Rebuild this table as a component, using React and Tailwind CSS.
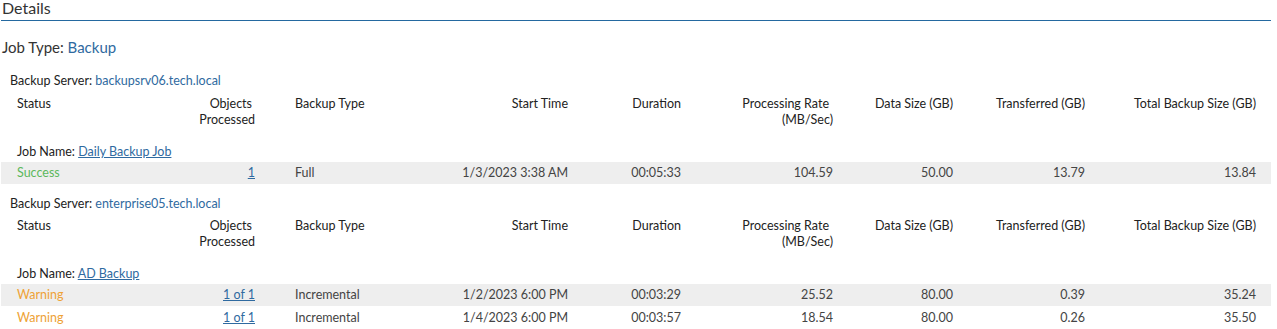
import React from 'react';

const cols = 'grid grid-cols-[118px_120px_195px_118px_113px_152px_120px_132px_171px]';

const servers = [
  {
    name: 'backupsrv06.tech.local',
    job: 'Daily Backup Job',
    rows: [
      { status: 'Success', objects: '1', type: 'Full', start: '1/3/2023 3:38 AM', duration: '00:05:33', rate: '104.59', data: '50.00', transferred: '13.79', total: '13.84' },
    ],
  },
  {
    name: 'enterprise05.tech.local',
    job: 'AD Backup',
    rows: [
      { status: 'Warning', objects: '1 of 1', type: 'Incremental', start: '1/2/2023 6:00 PM', duration: '00:03:29', rate: '25.52', data: '80.00', transferred: '0.39', total: '35.24' },
      { status: 'Warning', objects: '1 of 1', type: 'Incremental', start: '1/4/2023 6:00 PM', duration: '00:03:57', rate: '18.54', data: '80.00', transferred: '0.26', total: '35.50' },
    ],
  },
];

const statusColor = (s) => (s === 'Success' ? 'text-[#5cb85c]' : 'text-[#eea236]');

const HeaderRow = () => (
  <div className={`${cols} pl-4 text-[#222] leading-4`}>
    <div>Status</div>
    <div className="text-right">
      <div className="pr-[3px]">Objects</div>
      <div>Processed</div>
    </div>
    <div className="pl-10">Backup Type</div>
    <div className="text-right">Start Time</div>
    <div className="text-right">Duration</div>
    <div className="text-right">
      <div className="pr-1">Processing Rate</div>
      <div>(MB/Sec)</div>
    </div>
    <div className="text-right">Data Size (GB)</div>
    <div className="text-right">Transferred (GB)</div>
    <div className="text-right">Total Backup Size (GB)</div>
  </div>
);

const DataRow = ({ row, shaded }) => (
  <div className={`${cols} pl-4 h-[22px] items-center text-[#444] ${shaded ? 'bg-[#eeeeee]' : ''}`}>
    <div className={statusColor(row.status)}>{row.status}</div>
    <div className="text-right">
      <span className="text-[#2f6aa0] underline">{row.objects}</span>
    </div>
    <div className="pl-10">{row.type}</div>
    <div className="text-right">{row.start}</div>
    <div className="text-right">{row.duration}</div>
    <div className="text-right">{row.rate}</div>
    <div className="text-right">{row.data}</div>
    <div className="text-right">{row.transferred}</div>
    <div className="text-right">{row.total}</div>
  </div>
);

export default function App() {
  return (
    <div className="w-[1277px] h-[329px] overflow-hidden bg-white font-['Lato',sans-serif] text-[12.5px] text-[#333]">
      <div className="ml-px w-[1270px]">
        {/* Page title */}
        <div className="h-[21px] border-b border-[#2469a0] text-[16px] leading-4 pl-px text-[#333]">Details</div>

        <div className="mt-4 h-5 leading-5 text-[15px] pl-px">
          Job Type: <span className="text-[#2f6aa0]">Backup</span>
        </div>

        {servers.map((s, i) => (
          <div key={s.name} className={i === 0 ? 'mt-4' : 'mt-3'}>
            <div className="h-4 leading-4 pl-[9px] text-[#222]">
              Backup Server: <span className="text-[#2f6aa0]">{s.name}</span>
            </div>
            <div className={i === 0 ? 'mt-[7px]' : 'mt-[6px]'}>
              <HeaderRow />
            </div>
            <div className="mt-4 h-4 leading-4 pl-4 text-[#222]">
              Job Name: <span className="text-[#2f6aa0] underline">{s.job}</span>
            </div>
            <div className="mt-[2px] flex flex-col gap-px">
              {s.rows.map((r, j) => (
                <DataRow key={j} row={r} shaded={j % 2 === 0} />
              ))}
            </div>
          </div>
        ))}
      </div>
    </div>
  );
}
